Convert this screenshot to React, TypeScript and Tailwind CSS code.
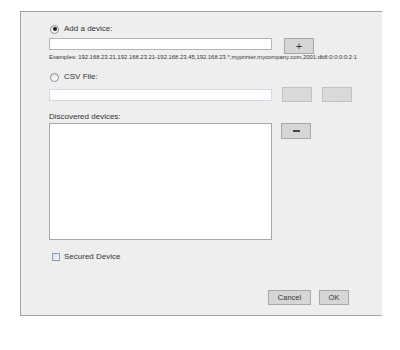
import React, { useState } from 'react';

const font = { fontFamily: '"Liberation Sans", Arial, sans-serif' };

const Radio: React.FC<{ checked: boolean; label: string; onClick: () => void }> = ({ checked, label, onClick }) => (
  <div className="flex items-center h-[10px] cursor-pointer" onClick={onClick}>
    <span className="ml-[1px] w-[9px] h-[9px] rounded-full border border-[#8c8c8c] bg-gradient-to-b from-[#e6e6e6] to-[#ffffff] flex items-center justify-center">
      {checked && <span className="w-[4px] h-[4px] rounded-full bg-[#1a1a1a]" />}
    </span>
    <span className="ml-[5px] text-[8px] leading-[10px] text-[#333]">{label}</span>
  </div>
);

export default function App() {
  const [mode, setMode] = useState<'device' | 'csv'>('device');
  const [secured, setSecured] = useState(false);

  return (
    <div className="w-[400px] h-[350px] bg-white pt-[11px] pl-[20px]" style={font}>
      <div className="w-[362px] h-[305px] border-l border-t border-b border-[#a3a3a3] bg-[#eeeeee] pl-[28px] pt-[12px] flex flex-col">
        {/* Add a device */}
        <Radio checked={mode === 'device'} label="Add a device:" onClick={() => setMode('device')} />
        <div className="flex items-start mt-[4px] h-[16px]">
          <input className="w-[223px] h-[12px] bg-white border border-[#b5b5b5] outline-none text-[8px] px-[2px]" />
          <button className="ml-[12px] w-[30px] h-[16px] bg-[#d6d6d6] border border-[#a8a8a8] flex items-center justify-center text-[#333] text-[11px] leading-none">
            +
          </button>
        </div>
        <div className="h-[7px] text-[5.9px] leading-[7px] text-[#333] whitespace-nowrap">
          Examples: 192.168.23.21,192.168.23.21-192.168.23.45,192.168.23.*,myprinter.mycompany.com,2001:db8:0:0:0:0:2:1
        </div>

        {/* CSV file */}
        <div className="mt-[11px]">
          <Radio checked={mode === 'csv'} label="CSV File:" onClick={() => setMode('csv')} />
        </div>
        <div className="flex items-center mt-[5px] h-[15px]">
          <div className="w-[223px] h-[12px] bg-white border border-[#d0dbe6]" />
          <button disabled className="ml-[10px] w-[30px] h-[15px] bg-[#d9d9d9] border border-[#c2c2c2] text-[#bbb] text-[8px]" />
          <button disabled className="ml-[10px] w-[30px] h-[15px] bg-[#d9d9d9] border border-[#c2c2c2] text-[#bfbfbf] text-[7px] leading-[13px]">
            ...
          </button>
        </div>

        {/* Discovered */}
        <div className="mt-[10px] h-[10px] text-[8px] leading-[10px] text-[#333]">Discovered devices:</div>
        <div className="flex items-start mt-[1px]">
          <div className="w-[223px] h-[117px] bg-white border border-[#a8a8a8]" />
          <button className="ml-[9px] w-[30px] h-[16px] bg-[#d6d6d6] border border-[#a8a8a8] flex items-center justify-center">
            <span className="w-[7px] h-[2px] bg-[#444]" />
          </button>
        </div>

        {/* Secured */}
        <div className="mt-[12px] flex items-center h-[10px] cursor-pointer" onClick={() => setSecured(!secured)}>
          <span className="ml-[3px] w-[8px] h-[8px] border border-[#8e9db4] bg-gradient-to-br from-[#d9e1ec] to-[#f4f6f9] flex items-center justify-center text-[6px] leading-none">
            {secured ? '✓' : ''}
          </span>
          <span className="ml-[4px] text-[8px] leading-[10px] text-[#333]">Secured Device</span>
        </div>

        {/* Footer */}
        <div className="mt-[28px] flex justify-end pr-[33px]">
          <button className="w-[43px] h-[15px] bg-[#d6d6d6] border border-[#a8a8a8] text-[7.5px] leading-[13px] text-[#333]">Cancel</button>
          <button className="ml-[8px] w-[30px] h-[15px] bg-[#d6d6d6] border border-[#a8a8a8] text-[7.5px] leading-[13px] text-[#333]">OK</button>
        </div>
      </div>
    </div>
  );
}
